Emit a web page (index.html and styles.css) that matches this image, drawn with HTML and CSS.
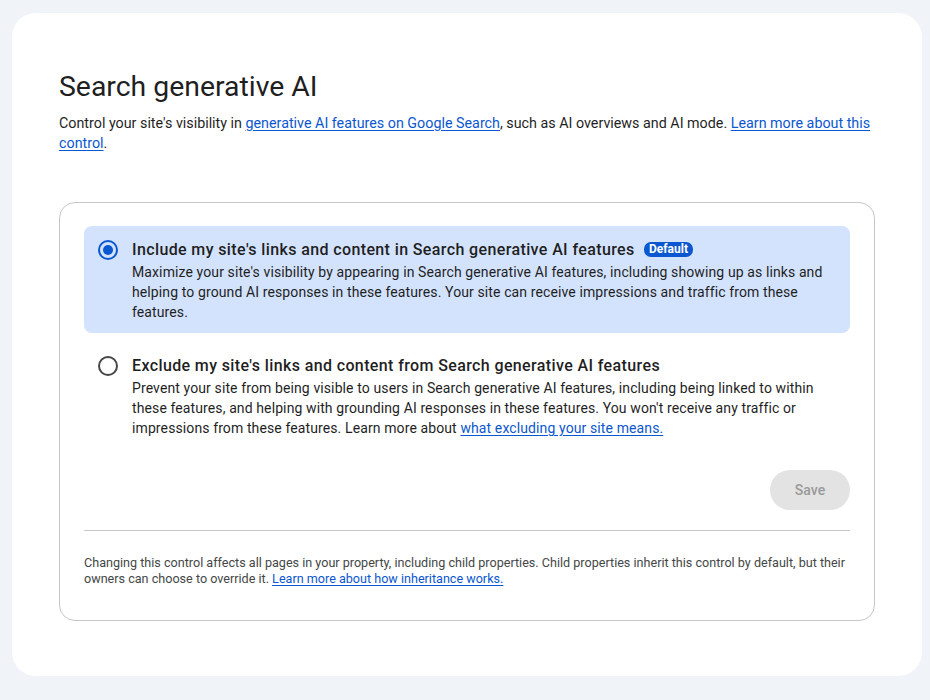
FILE: index.html
```html
<!DOCTYPE html>
<html lang="en">
<head>
<meta charset="utf-8">
<title>Search generative AI</title>
<link rel="stylesheet" href="styles.css">
</head>
<body>
<main class="card">
  <h1 class="title">Search generative AI</h1>
  <p class="intro">Control your site's visibility in <a href="#">generative AI features on Google Search</a>, such as AI overviews and AI mode. <a href="#">Learn more about this control</a>.</p>

  <section class="panel">
    <div class="option selected">
      <span class="radio on"><span class="dot"></span></span>
      <div class="option-body">
        <div class="option-title">Include my site's links and content in Search generative AI features <span class="badge">Default</span></div>
        <div class="option-desc">Maximize your site's visibility by appearing in Search generative AI features, including showing up as links and helping to ground AI responses in these features. Your site can receive impressions and traffic from these features.</div>
      </div>
    </div>
    <div class="option">
      <span class="radio"></span>
      <div class="option-body">
        <div class="option-title">Exclude my site's links and content from Search generative AI features</div>
        <div class="option-desc">Prevent your site from being visible to users in Search generative AI features, including being linked to within these features, and helping with grounding AI responses in these features. You won't receive any traffic or impressions from these features. Learn more about <a href="#">what excluding your site means.</a></div>
      </div>
    </div>
    <div class="actions">
      <button class="save" disabled>Save</button>
    </div>
    <hr class="divider">
    <p class="footnote">Changing this control affects all pages in your property, including child properties. Child properties inherit this control by default, but their owners can choose to override it. <a href="#">Learn more about how inheritance works.</a></p>
  </section>
</main>
</body>
</html>
```
FILE: styles.css
```css
* { box-sizing: border-box; }
html, body { margin: 0; }
body {
  background: #f0f4f9;
  padding: 13px 8px 24px 12px;
  font-family: Roboto, "Noto Sans", Arial, sans-serif;
  color: #1f1f1f;
}
a { color: #0b57d0; text-decoration: underline; text-underline-offset: 2px; }
.card {
  width: 910px;
  height: 663px;
  background: #ffffff;
  border-radius: 24px;
  padding: 56px 47px 0 47px;
}
.title {
  margin: 0;
  font-size: 28.4px;
  line-height: 36px;
  font-weight: 400;
  color: #1f1f1f;
}
.intro {
  margin: 8px 0 0 0;
  font-size: 14.3px;
  line-height: 20px;
}
.panel {
  margin-top: 49px;
  border: 1px solid #c4c7c5;
  border-radius: 16px;
  padding: 23px 24px 33px 24px;
}
.option {
  display: flex;
  align-items: flex-start;
  gap: 14px;
  padding: 12px 14px 11px 14px;
  border-radius: 8px;
}
.option + .option { margin-top: 9px; padding-bottom: 12px; }
.option.selected { background: #d3e3fd; }
.radio {
  flex: none;
  width: 20px;
  height: 20px;
  margin-top: 2px;
  border: 2px solid #444746;
  border-radius: 50%;
  display: flex;
  align-items: center;
  justify-content: center;
}
.radio.on { border-color: #0b57d0; }
.dot { width: 10px; height: 10px; border-radius: 50%; background: #0b57d0; }
.option-title {
  font-size: 16px;
  line-height: 24px;
  font-weight: 500;
  letter-spacing: 0.38px;
  color: #1f1f1f;
}
.badge {
  display: inline-block;
  margin-left: 5px;
  padding: 0 5px;
  height: 15px;
  line-height: 15px;
  font-size: 12px;
  font-weight: 700;
  letter-spacing: 0;
  color: #ffffff;
  background: #0b57d0;
  border-radius: 7px;
  vertical-align: 2px;
}
.option-desc {
  font-size: 14px;
  line-height: 20px;
  letter-spacing: 0.11px;
  color: #1f1f1f;
}
.actions {
  display: flex;
  justify-content: flex-end;
  margin-top: 20px;
}
.save {
  width: 80px;
  height: 40px;
  border: none;
  border-radius: 20px;
  background: #e3e3e3;
  color: #9a9a9a;
  font-family: inherit;
  font-size: 14px;
  font-weight: 500;
}
.divider {
  margin: 20px 0 0 0;
  border: none;
  border-top: 1px solid #c4c7c5;
}
.footnote {
  margin: 24px 0 0 0;
  font-size: 12.6px;
  line-height: 16px;
  color: #444746;
}
```
